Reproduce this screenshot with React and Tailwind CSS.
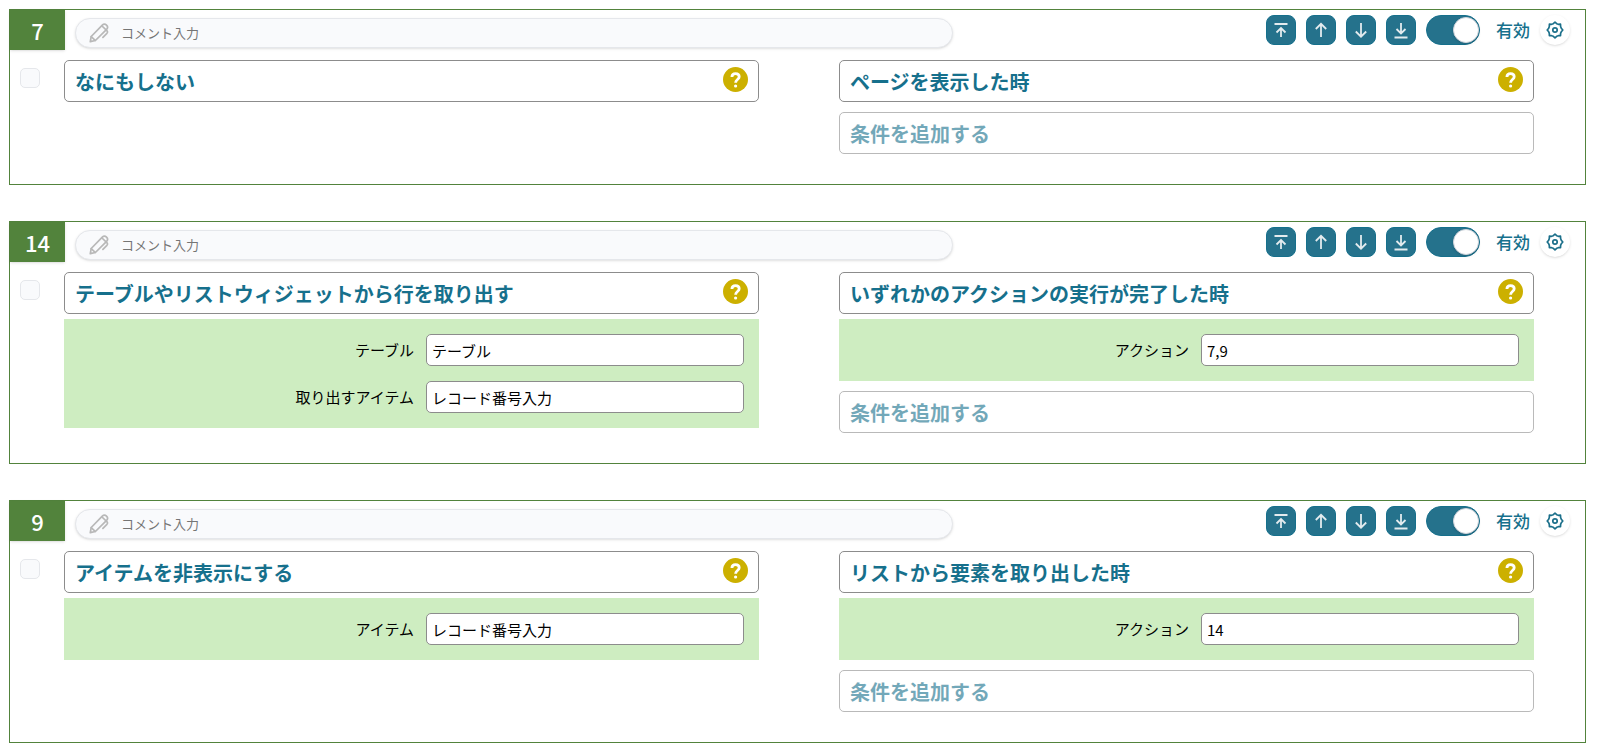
import { useState } from 'react'

const ACTIONS = [
  {
    id: 7,
    title: 'なにもしない',
    fields: [],
    trigger: 'ページを表示した時',
    triggerFields: [],
  },
  {
    id: 14,
    title: 'テーブルやリストウィジェットから行を取り出す',
    fields: [
      { label: 'テーブル', value: 'テーブル' },
      { label: '取り出すアイテム', value: 'レコード番号入力' },
    ],
    trigger: 'いずれかのアクションの実行が完了した時',
    triggerFields: [{ label: 'アクション', value: '7,9' }],
  },
  {
    id: 9,
    title: 'アイテムを非表示にする',
    fields: [{ label: 'アイテム', value: 'レコード番号入力' }],
    trigger: 'リストから要素を取り出した時',
    triggerFields: [{ label: 'アクション', value: '14' }],
  },
]

const MOVES = [
  { label: '一番上へ', d: 'M8.5 9h13M15 22v-9M10.5 17.5L15 13l4.5 4.5' },
  { label: '上へ', d: 'M15 22V9M9.8 14L15 8.8l5.2 5.2' },
  { label: '下へ', d: 'M15 8v13M9.8 16.5l5.2 5.2 5.2-5.2' },
  { label: '一番下へ', d: 'M8.5 22.5h13M15 8v10M10.5 14l4.5 4.5 4.5-4.5' },
]

function PencilIcon() {
  return (
    <svg
      viewBox="0 0 20 20"
      className="w-5 h-5 shrink-0"
      fill="none"
      stroke="#b8b8b8"
      strokeWidth="1.7"
      strokeLinecap="round"
      strokeLinejoin="round"
      aria-hidden="true"
    >
      <path d="M1.3 18.7l.9-5.200L13.300 2.200a2.900 2.900 0 0 1 4.300 4.100L6.400 17.500z" />
      <path d="M2.200 13.700l4 3.700M13 3l3.800 3.600" />
      <path d="M17.400 7.200c1.200.9 1.500 2 .5 3.100l-4 4" />
    </svg>
  )
}

function GearIcon() {
  return (
    <svg
      viewBox="0 0 18 18"
      className="w-[18px] h-[18px]"
      fill="none"
      stroke="#1b6f8a"
      strokeWidth="1.7"
      strokeLinejoin="round"
      aria-hidden="true"
    >
      <path d="M7.300 2.700L9 1.200l1.700 1.500 1.600.6 2.200-.1.100 2.300.7 1.800L16.800 9l-1.500 1.700-.7 1.700-.1 2.200-2.200.1-1.600.6L9 16.800l-1.700-1.500-1.700-.6-2.200-.1-.1-2.200-.6-1.700L1.200 9l1.500-1.700.6-1.800.1-2.300 2.200.1z" />
      <circle cx="9" cy="9" r="2.200" />
    </svg>
  )
}

function HelpButton() {
  return (
    <button
      type="button"
      aria-label="ヘルプ"
      className="w-[25px] h-[25px] shrink-0 rounded-full bg-[#ccb000]"
    >
      <svg viewBox="0 0 25 25" fill="none" stroke="#fff" strokeWidth="2.800" aria-hidden="true">
        <path d="M8.900 10c.1-2.200 1.600-3.300 3.600-3.300 2.200 0 3.700 1.200 3.700 3.100 0 2.700-3.500 2.700-3.500 5.500v.5" />
        <circle cx="12.600" cy="19" r="1.600" fill="#fff" stroke="none" />
      </svg>
    </button>
  )
}

function TitleBox({ children }) {
  return (
    <div className="flex items-start justify-between h-[42px] pt-[6px] px-[10px] bg-white border border-[#8c8c8c] rounded-[5px]">
      <button type="button" className="flex-1 text-left text-xl leading-[30px] font-bold text-[#16708c]">
        {children}
      </button>
      <HelpButton />
    </div>
  )
}

function FieldPanel({ prefix, fields }) {
  if (fields.length === 0) return null

  return (
    <div className="flex flex-col gap-[15px] mt-[5px] p-[15px] bg-[#ceedc1]">
      {fields.map((field, i) => (
        <div key={field.label} className="flex items-center justify-end gap-3">
          <label htmlFor={`${prefix}-${i}`} className="text-[15px]">
            {field.label}
          </label>
          <input
            id={`${prefix}-${i}`}
            defaultValue={field.value}
            className="w-[318px] h-8 px-[5px] text-[15px] bg-white border border-[#8c8c8c] rounded-[5px]"
          />
        </div>
      ))}
    </div>
  )
}

function Controls({ id }) {
  const [enabled, setEnabled] = useState(true)

  return (
    <div className="flex items-center gap-[10px] h-[30px] mt-[5px] mr-[15px]">
      {MOVES.map((move) => (
        <button
          key={move.label}
          type="button"
          aria-label={move.label}
          className="w-[30px] h-[30px] rounded-lg bg-[#25728c] border border-[#16708c]"
        >
          <svg
            viewBox="1 1 28 28"
            fill="none"
            stroke="#e3ebee"
            strokeWidth="1.800"
            aria-hidden="true"
          >
            <path d={move.d} />
          </svg>
        </button>
      ))}
      <div className="relative w-[54px] h-[30px]">
        <input
          id={`enabled-${id}`}
          type="checkbox"
          checked={enabled}
          onChange={(e) => setEnabled(e.target.checked)}
          className="peer block appearance-none w-full h-full rounded-full bg-gray-300 checked:bg-[#25728c] checked:border checked:border-[#16708c]"
        />
        <span className="absolute top-[2px] left-[2px] w-[26px] h-[26px] rounded-full bg-white border border-gray-300 shadow-sm pointer-events-none peer-checked:left-auto peer-checked:right-[1px]" />
      </div>
      <label htmlFor={`enabled-${id}`} className="ml-[6px] text-[17px] font-medium text-[#16708c]">
        有効
      </label>
      <button
        type="button"
        aria-label="設定"
        className="flex items-center justify-center w-[30px] h-[30px] rounded-full bg-white shadow"
      >
        <GearIcon />
      </button>
    </div>
  )
}

function ActionCard({ action }) {
  return (
    <section className="border border-[#52833c] bg-white">
      <header className="flex items-start h-10">
        <div className="flex items-center justify-center w-[55px] h-10 shrink-0 bg-[#52833c] text-white text-[22px] font-medium shadow-sm">
          {action.id}
        </div>
        <div className="flex items-center gap-3 w-[55.75%] h-[30px] mt-2 ml-[10px] pl-[13px] pr-4 rounded-full bg-[#f9fafc] border border-gray-200 shadow-sm">
          <PencilIcon />
          <input
            aria-label="コメント入力"
            placeholder="コメント入力"
            className="flex-1 min-w-0 text-[13px] placeholder:text-[#757575]"
          />
        </div>
        <div className="flex-1" />
        <Controls id={action.id} />
      </header>

      <div className="flex pt-[10px] pb-[30px] pl-[10px] pr-[51px]">
        <input
          type="checkbox"
          aria-label={`アクション${action.id}を選択`}
          className="appearance-none w-5 h-5 shrink-0 mt-2 mr-6 rounded-[5px] bg-[#f9fafc] border border-gray-200 checked:bg-[#25728c]"
        />
        <div className="flex-1 grid grid-cols-2 gap-x-20">
          <div>
            <TitleBox>{action.title}</TitleBox>
            <FieldPanel prefix={`action-${action.id}`} fields={action.fields} />
          </div>
          <div>
            <TitleBox>{action.trigger}</TitleBox>
            <FieldPanel prefix={`trigger-${action.id}`} fields={action.triggerFields} />
            <button
              type="button"
              className="flex items-start w-full h-[42px] mt-[10px] pt-[6px] px-[10px] text-xl leading-[30px] font-bold text-[#16708c] border border-[#8c8c8c] rounded-[5px] opacity-60"
            >
              条件を追加する
            </button>
          </div>
        </div>
      </div>
    </section>
  )
}

export default function App() {
  return (
    <main className="flex flex-col gap-9 pt-[9px] pl-[9px] pr-[14px] bg-white text-black font-['Noto_Sans_CJK_JP',sans-serif]">
      {ACTIONS.map((action) => (
        <ActionCard key={action.id} action={action} />
      ))}
    </main>
  )
}
